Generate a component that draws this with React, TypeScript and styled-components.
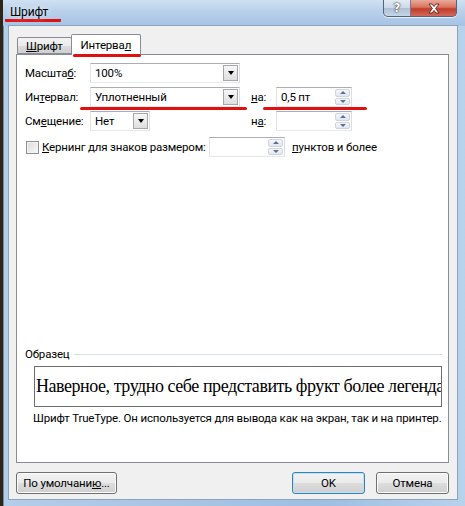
import styled, { createGlobalStyle } from 'styled-components'

const GlobalStyle = createGlobalStyle`
  html, body {
    margin: 0;
    padding: 0;
    background: #2e2418;
    overflow: hidden;
  }
  body {
    font-family: Roboto, 'Open Sans', sans-serif;
    font-size: 11.5px;
    letter-spacing: -0.17px;
    color: #000;
  }
`

const Window = styled.div`
  margin-left: 3px;
  width: 462px;
  height: 506px;
  display: flex;
  flex-direction: column;
  background: linear-gradient(to right, #b4cde8 0%, #a8c4e3 40%, #9fbfe0 70%, #b9d2ec 100%);
  box-shadow: inset 1px 0 0 #6f8aa8;
`

const TitleBar = styled.div`
  height: 26px;
  flex: none;
  display: grid;
  grid-template-columns: 1fr 74px;
  align-items: start;
  padding-left: 7px;
  padding-right: 8px;
  background: linear-gradient(to bottom, #cfe0f2 0%, #b8d0ea 45%, #a6c3e3 100%);
`

const Title = styled.div`
  margin-top: 5px;
  font-size: 12px;
  color: #000;
  text-shadow: 0 0 6px rgba(255, 255, 255, 0.9);
`

const TitleMark = styled.span`
  display: inline-block;
  margin-left: -5px;
  padding: 0 13px 0 5px;
  border-bottom: 3px solid #e01010;
  border-radius: 1px;
`

const Controls = styled.div`
  display: grid;
  grid-template-columns: 27px 1fr;
  height: 17px;
  box-sizing: border-box;
  border: 1px solid #4f637e;
  border-top: none;
  border-radius: 0 0 5px 5px;
  overflow: hidden;
  background: #c7503c;
  box-shadow: 0 1px 0 rgba(255, 255, 255, 0.7);
`

const HelpBtn = styled.div`
  display: flex;
  align-items: center;
  justify-content: center;
  background: linear-gradient(to bottom, #e3ebf4 0%, #cbd8e7 50%, #aebfd5 51%, #c6d6e8 100%);
  border-right: 1px solid #6d7f96;
  color: #fff;
  font-family: 'DejaVu Sans', sans-serif;
  font-weight: bold;
  font-size: 12px;
  line-height: 16px;
  text-shadow: 0 0 1px #222, 0 0 2px #333;
`

const CloseBtn = styled.div`
  display: flex;
  align-items: center;
  justify-content: center;
  background: linear-gradient(to bottom, #eaa99b 0%, #d9735f 45%, #c03d28 55%, #d4685a 100%);
`

const Client = styled.div`
  flex: 1;
  margin: 0 8px 7px 6px;
  background: #f0f0f0;
  padding: 8px 8px 5px 7px;
  display: flex;
  flex-direction: column;
  box-shadow: 0 0 0 1px #8aa3c0;
`

const Tabs = styled.div`
  display: flex;
  align-items: flex-end;
  height: 20px;
  padding-left: 1px;
  position: relative;
  z-index: 1;
`

const Tab = styled.div<{ $active?: boolean }>`
  position: relative;
  height: ${({ $active }) => ($active ? '21px' : '17px')};
  margin-bottom: ${({ $active }) => ($active ? '-1px' : '0')};
  padding: 0 ${({ $active }) => ($active ? '9px' : '8px')};
  box-sizing: border-box;
  display: flex;
  align-items: center;
  border: 1px solid #898c95;
  border-bottom: ${({ $active }) => ($active ? 'none' : '1px solid #898c95')};
  border-radius: 2px 2px 0 0;
  background: ${({ $active }) =>
    $active ? '#fff' : 'linear-gradient(to bottom, #f3f3f3 0%, #ebebeb 50%, #dddddd 51%, #cfcfcf 100%)'};
  & + & {
    margin-left: -1px;
  }
`

const TabMark = styled.div`
  position: absolute;
  left: 1px;
  right: -1px;
  bottom: -2px;
  height: 3px;
  background: #e01010;
  border-radius: 2px;
`

const U = styled.span`
  text-decoration: underline;
  text-underline-offset: 1px;
`

const Panel = styled.div`
  flex: 1;
  background: #fff;
  border: 1px solid #898c95;
  display: flex;
  flex-direction: column;
  padding: 8px 6px 0 8px;
`

const FieldGrid = styled.div`
  display: grid;
  grid-template-columns: 65px 150px 11px 25px 76px;
  grid-auto-rows: 20px;
  row-gap: 4px;
  align-items: center;
`

const Label = styled.div`
  white-space: nowrap;
`

const Combo = styled.div<{ $width?: number }>`
  position: relative;
  width: ${({ $width }) => ($width ? `${$width}px` : '100%')};
  height: 20px;
  box-sizing: border-box;
  border: 1px solid #abadb3;
  border-color: #abadb3 #dbdfe6 #e3e9ef #e2e3ea;
  background: #fff;
  display: flex;
  align-items: center;
  padding-left: 4px;
`

const ComboBtn = styled.div`
  position: absolute;
  top: 1px;
  right: 1px;
  bottom: 1px;
  width: 15px;
  box-sizing: border-box;
  border: 1px solid #a7a7a7;
  background: linear-gradient(to bottom, #f7f7f7, #dedede);
  display: flex;
  align-items: center;
  justify-content: center;
`

const ArrowDown = styled.div`
  width: 0;
  height: 0;
  border-left: 3.5px solid transparent;
  border-right: 3.5px solid transparent;
  border-top: 4px solid #000;
`

const Spin = styled.div<{ $width: number }>`
  position: relative;
  flex: none;
  width: ${({ $width }) => $width}px;
  height: 20px;
  box-sizing: border-box;
  border: 1px solid #abadb3;
  border-color: #abadb3 #dbdfe6 #e3e9ef #e2e3ea;
  background: #fff;
  display: flex;
  align-items: center;
  padding-left: 4px;
`

const SpinBtns = styled.div`
  position: absolute;
  top: 1px;
  right: 1px;
  bottom: 1px;
  width: 15px;
  display: flex;
  flex-direction: column;
  gap: 1px;
`

const SpinBtn = styled.div`
  flex: 1;
  box-sizing: border-box;
  border: 1px solid #d0d4db;
  border-radius: 2px;
  background: linear-gradient(to bottom, #f6f8fb, #e2e7ee);
  display: flex;
  align-items: center;
  justify-content: center;
`

const ArrowUpSmall = styled.div`
  width: 0;
  height: 0;
  border-left: 3px solid transparent;
  border-right: 3px solid transparent;
  border-bottom: 3px solid #56719a;
`

const ArrowDownSmall = styled.div`
  width: 0;
  height: 0;
  border-left: 3px solid transparent;
  border-right: 3px solid transparent;
  border-top: 3px solid #56719a;
`

const MarkCell = styled.div`
  position: relative;
  height: 100%;
  display: flex;
  align-items: center;
`

const RedLine = styled.div<{ $left: number; $right: number }>`
  position: absolute;
  left: ${({ $left }) => $left}px;
  right: ${({ $right }) => $right}px;
  bottom: -3px;
  height: 3px;
  background: #e01010;
  border-radius: 2px;
  z-index: 2;
`

const KernRow = styled.div`
  display: flex;
  align-items: center;
  margin-top: 6px;
  height: 20px;
  padding-left: 1px;
`

const Checkbox = styled.div`
  flex: none;
  width: 13px;
  height: 13px;
  box-sizing: border-box;
  border: 1px solid #8e8f8f;
  background: linear-gradient(135deg, #dcdcdc, #f8f8f8);
  box-shadow: inset 0 0 0 1px #f4f4f4;
  margin-right: 3px;
`

const KernLabel = styled.div`
  width: 167px;
  flex: none;
  white-space: nowrap;
`

const After = styled.div`
  margin-left: 7px;
  white-space: nowrap;
`

const Filler = styled.div`
  flex: 1;
`

const SampleHead = styled.div`
  display: flex;
  align-items: center;
  gap: 5px;
  &::after {
    content: '';
    flex: 1;
    height: 1px;
    background: #d5dfe5;
  }
`

const SampleBox = styled.div`
  margin: 5px 0 0 9px;
  height: 41px;
  box-sizing: border-box;
  border: 1px solid #6d6d6d;
  overflow: hidden;
  display: flex;
  align-items: center;
  padding-left: 1px;
  font-family: 'Liberation Serif', 'Times New Roman', serif;
  font-size: 18px;
  letter-spacing: -0.45px;
  white-space: nowrap;
`

const Note = styled.div`
  margin: 4px 0 37px 8px;
  white-space: nowrap;
`

const Footer = styled.div`
  display: flex;
  align-items: center;
  margin-top: 9px;
  gap: 11px;
`

const Button = styled.div<{ $width: number; $default?: boolean }>`
  width: ${({ $width }) => $width}px;
  height: 22px;
  box-sizing: border-box;
  border: 1px solid ${({ $default }) => ($default ? '#3c7fb1' : '#707070')};
  border-radius: 3px;
  background: linear-gradient(to bottom, #f2f2f2 0%, #ebebeb 50%, #dddddd 51%, #cfcfcf 100%);
  box-shadow: inset 0 0 0 1px ${({ $default }) => ($default ? '#b9e3f9' : '#fcfcfc')};
  display: flex;
  align-items: center;
  justify-content: center;
  white-space: nowrap;
`

const Gap = styled.div`
  flex: 1;
`

function SpinArrows() {
  return (
    <SpinBtns>
      <SpinBtn>
        <ArrowUpSmall />
      </SpinBtn>
      <SpinBtn>
        <ArrowDownSmall />
      </SpinBtn>
    </SpinBtns>
  )
}

function DropButton() {
  return (
    <ComboBtn>
      <ArrowDown />
    </ComboBtn>
  )
}

export default function App() {
  return (
    <>
      <GlobalStyle />
      <Window>
        <TitleBar>
          <Title>
            <TitleMark>Шрифт</TitleMark>
          </Title>
          <Controls>
            <HelpBtn>?</HelpBtn>
            <CloseBtn>
              <svg width="14" height="11" viewBox="0 0 14 11">
                <path
                  d="M2 1 L5 1 L7 3.5 L9 1 L12 1 L8.6 5.5 L12 10 L9 10 L7 7.5 L5 10 L2 10 L5.4 5.5 Z"
                  fill="#fff"
                  stroke="#5a2420"
                  strokeWidth="0.9"
                  strokeLinejoin="round"
                />
              </svg>
            </CloseBtn>
          </Controls>
        </TitleBar>
        <Client>
          <Tabs>
            <Tab>
              <span>
                <U>Ш</U>рифт
              </span>
            </Tab>
            <Tab $active>
              <span>
                Интерва<U>л</U>
              </span>
              <TabMark />
            </Tab>
          </Tabs>
          <Panel>
            <FieldGrid>
              <Label>
                Масшта<U>б</U>:
              </Label>
              <Combo>
                100%
                <DropButton />
              </Combo>
              <span />
              <span />
              <span />

              <MarkCell>
                <Label>
                  Ин<U>т</U>ервал:
                </Label>
                <RedLine $left={55} $right={-3} />
              </MarkCell>
              <MarkCell>
                <Combo>
                  Уплотненный
                  <DropButton />
                </Combo>
                <RedLine $left={-3} $right={-7} />
              </MarkCell>
              <span />
              <MarkCell>
                <Label>
                  <U>н</U>а:
                </Label>
                <RedLine $left={12} $right={-3} />
              </MarkCell>
              <MarkCell>
                <Spin $width={76}>
                  0,5 пт
                  <SpinArrows />
                </Spin>
                <RedLine $left={-3} $right={-15} />
              </MarkCell>

              <Label>
                См<U>е</U>щение:
              </Label>
              <Combo $width={60}>
                Нет
                <DropButton />
              </Combo>
              <span />
              <Label>
                н<U>а</U>:
              </Label>
              <Spin $width={76}>
                <SpinArrows />
              </Spin>
            </FieldGrid>

            <KernRow>
              <Checkbox />
              <KernLabel>
                <U>К</U>ернинг для знаков размером:
              </KernLabel>
              <Spin $width={76}>
                <SpinArrows />
              </Spin>
              <After>
                <U>п</U>унктов и более
              </After>
            </KernRow>

            <Filler />

            <SampleHead>Образец</SampleHead>
            <SampleBox>Наверное, трудно себе представить фрукт более легендарный, чем яблоко</SampleBox>
            <Note>Шрифт TrueType. Он используется для вывода как на экран, так и на принтер.</Note>
          </Panel>
          <Footer>
            <Button $width={101}>
              <span>
                По умолчани<U>ю</U>...
              </span>
            </Button>
            <Gap />
            <Button $width={73} $default>
              OK
            </Button>
            <Button $width={73}>Отмена</Button>
          </Footer>
        </Client>
      </Window>
    </>
  )
}
